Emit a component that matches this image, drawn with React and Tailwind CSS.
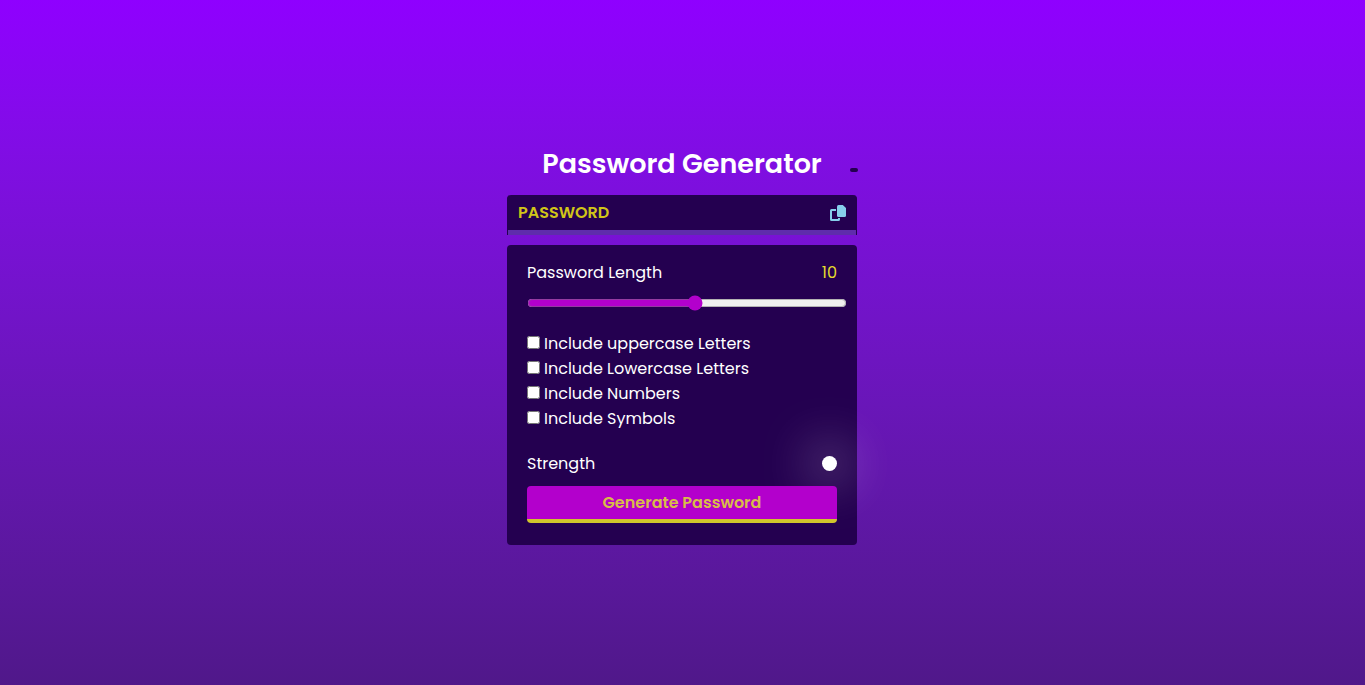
import { useState } from "react";

const OPTIONS = [
  "Include uppercase Letters",
  "Include Lowercase Letters",
  "Include Numbers",
  "Include Symbols",
];

function CopyIcon() {
  return (
    <svg viewBox="0 0 16 16" className="size-4" fill="#87ceeb" aria-hidden="true">
      <path d="M8.5 0h4.3L16 3v7.5a1.5 1.5 0 0 1-1.5 1.5h-6A1.5 1.5 0 0 1 7 10.5v-9A1.5 1.5 0 0 1 8.5 0z" />
      <path d="M1.5 4H6v2H2v8h6v-1h2v1.5a1.5 1.5 0 0 1-1.5 1.5h-7A1.5 1.5 0 0 1 0 14.5v-9A1.5 1.5 0 0 1 1.5 4z" />
    </svg>
  );
}

export default function App() {
  const [length, setLength] = useState(10);

  return (
    <main className="flex min-h-screen flex-col items-center justify-center bg-linear-to-b from-[#8f00ff] to-[#50188a] pr-px font-[Poppins,Inter,sans-serif] text-base leading-[25px] text-white">
      <div className="w-full max-w-[350px] pt-[2px]">
        <h1 className="text-center text-[27px] leading-[42px] font-semibold whitespace-nowrap">Password Generator</h1>

        <div className="relative mt-[10px] flex h-10 items-start rounded-t-[4px] border-x border-[#240050] bg-[#240050]">
          <div className="flex h-full w-full items-center border-b-5 border-[#5f2cac] px-[10px] pt-px">
            <input
              type="text"
              readOnly
              aria-label="Generated password"
              placeholder="PASSWORD"
              className="min-w-0 flex-1 bg-transparent font-semibold outline-none placeholder:text-[#d0c518]"
            />
            <button type="button" aria-label="Copy password">
              <CopyIcon />
            </button>
          </div>
          <span className="absolute -top-[27px] -right-[2px] h-1 w-2 rounded-[2px] bg-[#240050]" />
        </div>

        <section className="mt-[10px] rounded-[4px] bg-[#240050] px-5 pt-[15px] pb-[22px]">
          <div className="flex justify-between">
            <label htmlFor="length">Password Length</label>
            <span className="text-[#e6dc2c]">{length}</span>
          </div>
          <input
            id="length"
            type="range"
            min="0"
            max="19"
            value={length}
            onChange={(e) => setLength(Number(e.target.value))}
            className="mt-[10px] block h-4 w-[calc(100%+10px)] accent-[#b300cc]"
          />

          <div className="mt-5">
            {OPTIONS.map((label) => (
              <label key={label} className="flex items-center gap-1">
                <input type="checkbox" className="mb-[2px] size-[13px] accent-[#b300cc]" />
                {label}
              </label>
            ))}
          </div>

          <div className="mt-5 flex items-center justify-between">
            <span>Strength</span>
            <span className="size-[15px] rounded-full bg-white shadow-[0_0_50px_10px_#ffffff66]" />
          </div>

          <button
            type="button"
            className="relative mt-[10px] block h-[37px] w-full rounded-[4px] border-b-4 border-[#d0c52c] bg-[#b300cc] font-semibold text-[#d8bd48]"
          >
            Generate Password
          </button>
        </section>
      </div>
    </main>
  );
}
